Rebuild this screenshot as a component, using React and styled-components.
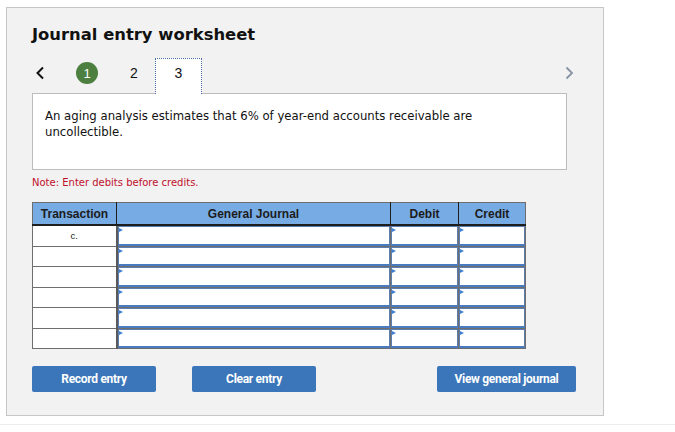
import React from 'react';
import styled, { createGlobalStyle } from 'styled-components';

const GlobalStyle = createGlobalStyle`
  html, body {
    margin: 0;
    padding: 0;
    background: #ffffff;
  }
  body {
    font-family: "DejaVu Sans", Verdana, sans-serif;
    color: #111;
  }
`;

const Page = styled.div`
  width: 675px;
  height: 432px;
  overflow: hidden;
  padding-top: 7px;
  box-sizing: border-box;
`;

const Panel = styled.div`
  margin-left: 6px;
  width: 598px;
  height: 409px;
  box-sizing: border-box;
  background: #f2f2f2;
  border: 1px solid #c6c6c6;
  padding: 17px 36px 0 25px;
`;

const Title = styled.h1`
  margin: 0;
  font-family: "DejaVu Sans", Verdana, sans-serif;
  font-weight: bold;
  font-size: 16.4px;
  line-height: 20px;
  color: #111;
`;

const NavRow = styled.div`
  display: flex;
  align-items: center;
  height: 36px;
  margin-top: 12px;
  font-family: "Liberation Sans", Arial, sans-serif;
  font-size: 14px;
`;

const Arrow = styled.span`
  display: flex;
  width: ${p => p.$w || 20}px;
  margin-left: ${p => p.$ml || 0}px;
  margin-right: ${p => p.$mr || 0}px;
  margin-top: ${p => p.$mt || 0}px;
`;

const StepDone = styled.span`
  width: 22px;
  height: 22px;
  border-radius: 50%;
  background: #4c7f40;
  color: #fff;
  display: flex;
  align-items: center;
  justify-content: center;
  margin-left: 23px;
  font-size: 13px;
  margin-top: -4px;
`;

const Step = styled.span`
  width: 22px;
  text-align: center;
  margin-left: 25px;
  margin-top: -4px;
`;

const StepActive = styled.span`
  width: 47px;
  height: 36px;
  box-sizing: border-box;
  background: #fff;
  border: 1px dotted #4a6fa8;
  border-bottom: none;
  display: flex;
  align-items: center;
  justify-content: center;
  margin-left: 10px;
  padding-bottom: 8px;
  position: relative;
  top: 1px;
`;

const Spacer = styled.span`
  flex: 1;
`;

const Prompt = styled.div`
  background: #fff;
  border: 1px solid #bdbdbd;
  height: 77px;
  box-sizing: border-box;
  padding: 14px 60px 0 12px;
  font-size: 11.7px;
  line-height: 16px;
  color: #111;
`;

const Note = styled.div`
  margin-top: 7px;
  font-size: 10px;
  line-height: 12px;
  color: #c0102a;
`;

const Table = styled.table`
  margin-top: 13px;
  border-collapse: collapse;
  table-layout: fixed;
  width: 490px;
  font-family: "Liberation Sans", Arial, sans-serif;
`;

const HeadCell = styled.th`
  width: ${p => p.$w}px;
  height: 21px;
  padding: 0;
  background: #77abe4;
  color: #1c1c1c;
  font-size: 12px;
  font-weight: bold;
  border: 1px solid #6e6e6e;
  border-right: 1px solid #1e1e1e;
  border-bottom: 2px solid #1e1e1e;
  &:last-child {
    border-right: 1px solid #6e6e6e;
  }
`;

const TxCell = styled.td`
  height: 18.5px;
  padding: 0;
  background: #fff;
  border: 1px solid #6e6e6e;
  border-right: 2px solid #5a5a5a;
  text-align: center;
  font-size: 9.5px;
  color: #222;
  vertical-align: middle;
`;

const InputCell = styled.td`
  height: 18.5px;
  padding: 0;
  border: 1px solid #6e6e6e;
  background: #fff;
`;

const InputBox = styled.div`
  position: relative;
  height: 16.5px;
  border: 1px solid #5b7eae;
  border-bottom: 2px solid #4a7bc0;
  background: #fff;
  &::before {
    content: '';
    position: absolute;
    left: 0;
    top: 1px;
    border-left: 4px solid #3e7fd2;
    border-top: 2.5px solid transparent;
    border-bottom: 2.5px solid transparent;
  }
`;

const ButtonRow = styled.div`
  display: flex;
  margin-top: 17px;
  margin-right: -9px;
`;

const Button = styled.button`
  width: ${p => p.$w}px;
  height: 26px;
  margin-left: ${p => p.$ml || 0}px;
  background: #3a76b9;
  color: #fff;
  border: none;
  border-radius: 2px;
  font-family: Roboto, "Liberation Sans", Arial, sans-serif;
  font-weight: bold;
  font-size: 12px;
  letter-spacing: -0.3px;
  padding: 0;
  cursor: pointer;
`;

const FooterLine = styled.div`
  margin-top: 8px;
  height: 1px;
  background: #ececec;
`;

const ChevronLeft = () => (
  <svg width="10" height="14" viewBox="0 0 10 14">
    <path d="M8 1.5 L2.5 7 L8 12.5" fill="none" stroke="#111" strokeWidth="2" />
  </svg>
);

const ChevronRight = () => (
  <svg width="9" height="14" viewBox="0 0 9 14">
    <path d="M1.5 1.5 L7 7 L1.5 12.5" fill="none" stroke="#8893a3" strokeWidth="1.8" />
  </svg>
);

const rows = ['c.', '', '', '', '', ''];

export default function App() {
  return (
    <Page>
      <GlobalStyle />
      <Panel>
        <Title>Journal entry worksheet</Title>
        <NavRow>
          <Arrow $w={18} $ml={3} $mt={-4}><ChevronLeft /></Arrow>
          <StepDone>1</StepDone>
          <Step>2</Step>
          <StepActive>3</StepActive>
          <Spacer />
          <Arrow $w={9} $mt={-4} $mr={-7}><ChevronRight /></Arrow>
        </NavRow>
        <Prompt>
          An aging analysis estimates that 6% of year-end accounts receivable are uncollectible.
        </Prompt>
        <Note>Note: Enter debits before credits.</Note>
        <Table>
          <thead>
            <tr>
              <HeadCell $w={83}>Transaction</HeadCell>
              <HeadCell $w={273}>General Journal</HeadCell>
              <HeadCell $w={67}>Debit</HeadCell>
              <HeadCell $w={66}>Credit</HeadCell>
            </tr>
          </thead>
          <tbody>
            {rows.map((tx, i) => (
              <tr key={i}>
                <TxCell>{tx}</TxCell>
                <InputCell><InputBox /></InputCell>
                <InputCell><InputBox /></InputCell>
                <InputCell><InputBox /></InputCell>
              </tr>
            ))}
          </tbody>
        </Table>
        <ButtonRow>
          <Button $w={124}>Record entry</Button>
          <Button $w={124} $ml={36}>Clear entry</Button>
          <Spacer />
          <Button $w={139}>View general journal</Button>
        </ButtonRow>
      </Panel>
      <FooterLine />
    </Page>
  );
}
